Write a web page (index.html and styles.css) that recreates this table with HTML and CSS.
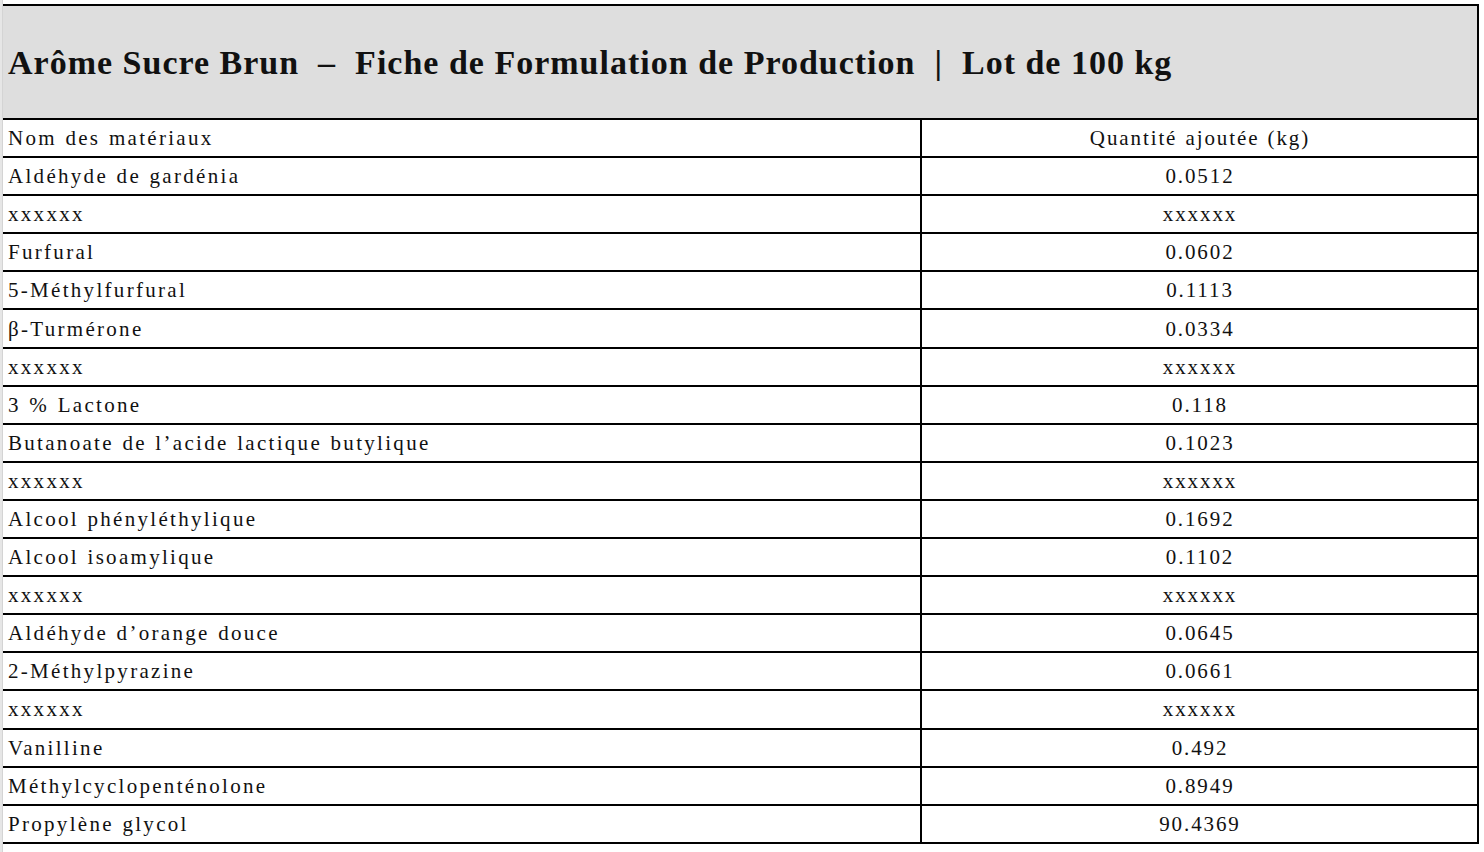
FILE: index.html
```html
<!DOCTYPE html>
<html lang="fr">
<head>
<meta charset="utf-8">
<title>Arôme Sucre Brun</title>
<link rel="stylesheet" href="styles.css">
</head>
<body>
<div class="sheet">
  <div class="gutter"></div>
  <table class="formula">
    <colgroup>
      <col class="c-name">
      <col class="c-qty">
    </colgroup>
    <thead>
      <tr class="title-row">
        <th colspan="2" class="title">Arôme Sucre Brun&nbsp; –&nbsp; Fiche de Formulation de Production&nbsp; |&nbsp; Lot de 100 kg</th>
      </tr>
      <tr>
        <th class="name">Nom des matériaux</th>
        <th class="qty">Quantité ajoutée (kg)</th>
      </tr>
    </thead>
    <tbody>
      <tr><td class="name">Aldéhyde de gardénia</td><td class="qty">0.0512</td></tr>
      <tr><td class="name">xxxxxx</td><td class="qty">xxxxxx</td></tr>
      <tr><td class="name">Furfural</td><td class="qty">0.0602</td></tr>
      <tr><td class="name">5-Méthylfurfural</td><td class="qty">0.1113</td></tr>
      <tr><td class="name">β-Turmérone</td><td class="qty">0.0334</td></tr>
      <tr><td class="name">xxxxxx</td><td class="qty">xxxxxx</td></tr>
      <tr><td class="name">3 % Lactone</td><td class="qty">0.118</td></tr>
      <tr><td class="name">Butanoate de l’acide lactique butylique</td><td class="qty">0.1023</td></tr>
      <tr><td class="name">xxxxxx</td><td class="qty">xxxxxx</td></tr>
      <tr><td class="name">Alcool phényléthylique</td><td class="qty">0.1692</td></tr>
      <tr><td class="name">Alcool isoamylique</td><td class="qty">0.1102</td></tr>
      <tr><td class="name">xxxxxx</td><td class="qty">xxxxxx</td></tr>
      <tr><td class="name">Aldéhyde d’orange douce</td><td class="qty">0.0645</td></tr>
      <tr><td class="name">2-Méthylpyrazine</td><td class="qty">0.0661</td></tr>
      <tr><td class="name">xxxxxx</td><td class="qty">xxxxxx</td></tr>
      <tr><td class="name">Vanilline</td><td class="qty">0.492</td></tr>
      <tr><td class="name">Méthylcyclopenténolone</td><td class="qty">0.8949</td></tr>
      <tr><td class="name">Propylène glycol</td><td class="qty">90.4369</td></tr>
    </tbody>
  </table>
</div>
</body>
</html>
```

FILE: styles.css
```css
html, body {
  margin: 0;
  padding: 0;
  background: #ffffff;
}

body {
  font-family: "Liberation Serif", "Times New Roman", serif;
  color: #111111;
}

.sheet {
  display: flex;
  align-items: flex-start;
  padding-top: 4px;
  height: 848px;
}

.gutter {
  width: 3px;
  align-self: stretch;
  margin-top: -4px;
  background: #e6e6e6;
  border-right: 1px solid #d4d4d4;
  box-sizing: border-box;
}

.formula {
  border-collapse: collapse;
  width: 1475px;
  table-layout: fixed;
}

.c-name { width: 918px; }
.c-qty { width: 557px; }

.formula th,
.formula td {
  border-top: 2px solid #000000;
  border-bottom: 2px solid #000000;
  padding: 0 4px 0 5px;
  height: 36.1px;
  font-size: 21px;
  font-weight: normal;
  line-height: 24px;
  letter-spacing: 2.3px;
  word-spacing: 1px;
  white-space: nowrap;
  vertical-align: middle;
}

.formula .name {
  text-align: left;
  border-right: 2px solid #000000;
}

.formula .qty {
  text-align: center;
  letter-spacing: 1.9px;
  border-right: 2px solid #000000;
}

.title-row .title {
  background: #dedede;
  height: 110px;
  text-align: left;
  font-size: 34px;
  font-weight: bold;
  line-height: 40px;
  letter-spacing: 1px;
  word-spacing: 0;
  border-right: 2px solid #000000;
  padding-top: 2px;
}
```
